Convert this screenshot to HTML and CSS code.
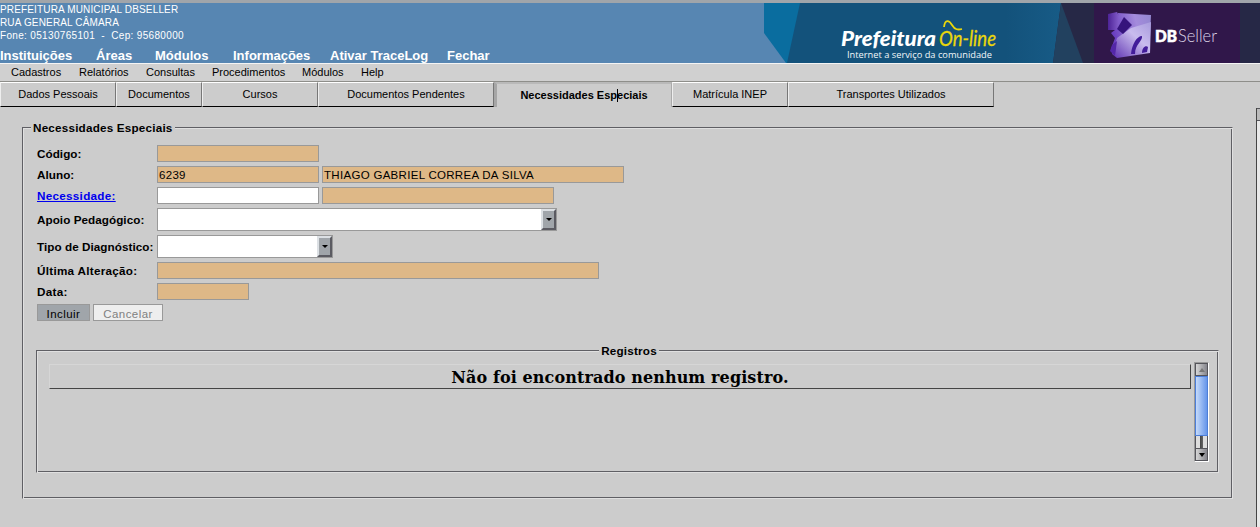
FILE: index.html
```html
<!DOCTYPE html>
<html lang="pt-BR">
<head>
<meta charset="utf-8">
<title>DBSeller - Necessidades Especiais</title>
<link rel="stylesheet" href="styles.css">
</head>
<body>
<header class="header">
  <div class="header-left">
    <div class="org"><div class="l1">PREFEITURA MUNICIPAL DBSELLER</div><div class="l2">RUA GENERAL CÂMARA</div><div class="l3">Fone: 05130765101 &nbsp;-&nbsp; Cep: 95680000</div></div>
    <nav class="main-nav"><a class="m1">Instituições</a><a class="m2">Áreas</a><a class="m3">Módulos</a><a class="m4">Informações</a><a class="m5">Ativar TraceLog</a><a class="m6">Fechar</a></nav>
  </div>
  <svg class="banner" width="496" height="60" viewBox="764 3 496 60">
    <defs>
      <linearGradient id="teal" x1="0" x2="1"><stop offset="0" stop-color="#13527b"/><stop offset=".8" stop-color="#13527b"/><stop offset="1" stop-color="#175b86"/></linearGradient>
      <linearGradient id="cube" x1="0" x2="1" y1=".3" y2="0"><stop offset="0" stop-color="#6a3fc0"/><stop offset=".6" stop-color="#a48bdc"/><stop offset="1" stop-color="#9287cf"/></linearGradient>
      <linearGradient id="cube2" x1="0" x2="1"><stop offset="0" stop-color="#4d2397"/><stop offset="1" stop-color="#8862cf"/></linearGradient>
      <linearGradient id="shine" x1="0" x2="1" y1="1" y2="0"><stop offset="0" stop-color="#5c2fb0"/><stop offset=".6" stop-color="#c9bcee"/><stop offset="1" stop-color="#a89bdd"/></linearGradient>
    </defs>
    <path fill="#262846" d="M1060 3h200v60H1050z"/>
    <path fill="url(#teal)" d="M799 3h262l-8 60H786z"/>
    <path fill="#22415f" d="M1061 3l22 60h-30z"/>
    <path fill="#0a6d9f" d="M764 3h36l-13 60h-1L764 33z"/>
    <path fill="#30174a" d="M1094 3h146v60h-146z"/>
    <path fill="url(#cube2)" d="M1108 14l9-2 3 6v12l-12 0z"/>
    <path fill="url(#cube)" d="M1118 13l33 2-1 22-36 17-3-5 4-11-4-5 8-6z"/>
    <path fill="url(#shine)" d="M1131 28l20-6-1 31-33 5-5-4 5-16z"/>
    <path fill="#35147c" d="M1124 17l8 8-9 9-6-5z"/>
    <path fill="#431d9a" d="M1131 54c1-10 6-18 11-18 1 5-7 8-7 18z"/>
    <path fill="#431d9a" d="M1142 53c0-6 4-8 6-6l-1 5z"/>
    <path fill="#5427a8" d="M1112 45l5-4-2 15-5-5z"/>
    <text x="841" y="46" class="logo-name" textLength="95" lengthAdjust="spacingAndGlyphs">Prefeitura</text>
    <text x="939" y="46" class="logo-online" textLength="57" lengthAdjust="spacingAndGlyphs">On-line</text>
    <path fill="none" stroke="#ead70b" stroke-width="1.8" d="M944 27c1-8 5-7 8-2s6 5 10 4"/>
    <text x="847" y="58" class="logo-sub" textLength="145" lengthAdjust="spacingAndGlyphs">Internet a serviço da comunidade</text>
    <text x="1155" y="42" class="logo-db" textLength="22" lengthAdjust="spacingAndGlyphs">DB</text>
    <text x="1178" y="42" class="logo-seller" textLength="39" lengthAdjust="spacingAndGlyphs">Seller</text>
  </svg>
</header>
<nav class="sub-nav"><a class="s1">Cadastros</a><a class="s2">Relatórios</a><a class="s3">Consultas</a><a class="s4">Procedimentos</a><a class="s5">Módulos</a><a class="s6">Help</a></nav>
<div class="tabs">
  <div class="tab t1">Dados Pessoais</div><div class="tab t2">Documentos</div><div class="tab t3">Cursos</div><div class="tab t4">Documentos Pendentes</div><div class="tab active">Necessidades Esp<span class="caret"></span>eciais</div><div class="tab t6">Matrícula INEP</div><div class="tab t7">Transportes Utilizados</div>
</div>
<main class="page">
  <section class="group">
    <h2 class="legend">Necessidades Especiais</h2>
    <div class="form">
      <label>Código:</label><div class="fields"><span class="input ro w162"></span></div>
      <label>Aluno:</label><div class="fields"><span class="input ro w162">6239</span><span class="input ro w302">THIAGO GABRIEL CORREA DA SILVA</span></div>
      <label class="wide"><a class="link">Necessidade:</a></label><div class="fields"><span class="input w162"></span><span class="input ro w232"></span></div>
      <label>Apoio Pedagógico:</label><div class="fields"><span class="select w400"><span class="arrow"></span></span></div>
      <label>Tipo de Diagnóstico:</label><div class="fields"><span class="select w176"><span class="arrow"></span></span></div>
      <label class="wide">Última Alteração:</label><div class="fields"><span class="input ro w442"></span></div>
      <label class="wide">Data:</label><div class="fields"><span class="input ro w92"></span></div>
    </div>
    <div class="buttons"><span class="btn incluir">Incluir</span><span class="btn disabled">Cancelar</span></div>
    <section class="group records">
      <h2 class="legend center">Registros</h2>
      <div class="records-body">
        <div class="empty"><span>Não foi encontrado nenhum registro.</span></div>
        <div class="scroll"><span class="sb up"></span><span class="thumb"></span><span class="track"></span><span class="sb down"></span></div>
      </div>
    </section>
  </section>
  <div class="page-scroll"><span></span></div>
</main>
</body>
</html>
```
FILE: styles.css
```css
* { box-sizing: border-box; }
body { margin: 0; width: 1260px; height: 527px; overflow: hidden; background: #ccc; color: #000; font-family: "Liberation Sans", Arial, sans-serif; }
.header { display: flex; height: 63px; border-top: 3px solid #a0a5aa; background: #5786b2; color: #fff; }
.header-left { width: 764px; }
.org { font-size: 10px; line-height: 13px; height: 43px; letter-spacing: 0.15px; white-space: nowrap; }
.l3 { letter-spacing: 0.33px; }
.main-nav { display: flex; font-size: 13px; font-weight: bold; line-height: 19px; white-space: nowrap; }
.m1 { width: 96px; } .m2 { width: 59px; } .m3 { width: 78px; } .m4 { width: 97px; } .m5 { width: 117px; }
.banner { display: block; }
.logo-name { font: italic 900 21px Lato, sans-serif; fill: #fff; }
.logo-online { font: italic 22px Lato, sans-serif; fill: #ead70b; stroke: #ead70b; stroke-width: .3px; }
.logo-sub { font: 9.5px "Open Sans", sans-serif; fill: #f2f7fa; }
.logo-db { font: 900 17px Lato, sans-serif; fill: #fff; stroke: #fff; stroke-width: .6px; }
.logo-seller { font: 300 18px Lato, sans-serif; fill: #ddd5e8; }
.sub-nav { display: flex; height: 19px; padding-left: 11px; border-top: 1px solid #f4f4f4; border-bottom: 1px solid #8e8e8a; background: #d0d0d0; font-size: 11px; line-height: 17px; }
.s1 { width: 68px; } .s2 { width: 67px; } .s3 { width: 66px; } .s4 { width: 90px; } .s5 { width: 59px; }
.tabs { display: flex; height: 26px; font-size: 11px; line-height: 23px; text-align: center; white-space: nowrap; }
.tab { height: 25px; border: 1px solid; border-color: #fff #777 #000 #eee; }
.t1 { width: 116px; } .t2 { width: 86px; } .t3 { width: 116px; } .t4 { width: 176px; } .t6 { width: 116px; } .t7 { width: 206px; }
.active { width: 178px; border-width: 2px 1px 0 3px; border-color: #b9b9b9 #aaa #ccc #a6a6a6; font-weight: bold; }
.caret { display: inline-block; width: 1px; height: 13px; margin-right: -1px; background: #000; vertical-align: -3px; }
.page { display: flex; justify-content: space-between; height: 419px; padding-left: 22px; }
.group { width: 1211px; height: 372px; margin-top: 19px; padding: 0 14px; border: 1px solid; border-color: #5f5f64 #e0e0e0 #e0e0e0 #5f5f64; box-shadow: inset 1px 1px #e0e0e0, inset -1px -1px #5f5f64; }
.legend { width: max-content; margin: -8px 0 0 -6px; padding: 0 2px; background: #ccc; font-size: 11.7px; line-height: 16px; letter-spacing: .2px; }
.form { display: grid; grid-template-columns: 120px 1fr; row-gap: 4px; margin-top: 9px; font-size: 11.7px; }
.form label { display: flex; align-items: center; font-weight: bold; letter-spacing: .05px; white-space: nowrap; }
.form .wide { letter-spacing: .28px; }
.link { color: #0000ee; text-decoration: underline; }
.fields { display: flex; gap: 3px; }
.input { height: 17px; padding-left: 1px; border: 1px solid #999; background: #fff; font-size: 11.5px; letter-spacing: .3px; line-height: 17px; white-space: nowrap; }
.ro { background: #deb887; }
.w92 { width: 92px; } .w162 { width: 162px; } .w176 { width: 176px; } .w232 { width: 232px; } .w302 { width: 302px; } .w400 { width: 400px; } .w442 { width: 442px; }
.select { display: flex; justify-content: flex-end; height: 23px; border: 1px solid #999; background: #fff; }
.arrow { display: flex; align-items: center; justify-content: center; width: 15px; border: 2px solid; border-color: #dce0e4 #5b5b62 #5b5b62 #dce0e4; background: #a0a5aa; }
.arrow::before { content: ""; border: 3px solid transparent; border-top-color: #000; border-bottom: 0; }
.buttons { display: flex; gap: 3px; margin-top: 4px; }
.btn { height: 17px; border: 1px solid #999; font-size: 11.5px; line-height: 18px; text-align: center; letter-spacing: .45px; }
.incluir { width: 53px; background: #a0a5aa; }
.disabled { width: 70px; background: #eee; color: #808080; }
.records { width: 1183px; height: 123px; margin: 29px 0 0 -1px; padding: 0 9px 0 12px; }
.center { margin-left: auto; margin-right: auto; }
.records-body { display: flex; justify-content: space-between; margin-top: 3px; }
.empty { width: 1142px; height: 25px; margin-top: 2px; border: 1px solid; border-color: #d6d6d6 #444 #444 #d6d6d6; font: bold 16px/25px "DejaVu Serif", serif; letter-spacing: .1px; text-align: center; }
.scroll { display: flex; flex-direction: column; width: 15px; height: 100px; border: 1px solid; border-color: #999 #fff #fff #999; }
.sb { display: flex; align-items: center; justify-content: center; height: 13px; border: 1px solid #55555b; background: linear-gradient(90deg, #d6d6d6, #85858c); }
.sb::before { content: ""; border: 3px solid transparent; }
.up::before { border-bottom: 4px solid #777; border-top: 0; }
.down::before { border-top: 4px solid #000; border-bottom: 0; }
.thumb { height: 60px; border: 1px solid #4c7ed8; background: linear-gradient(90deg, #c5dafa, #6595ea); }
.track { height: 12px; border: solid #55555b; border-width: 0 1px; background: linear-gradient(90deg, #ddd 4px, #444 4px, #666 7px, #ddd 7px); }
.page-scroll { width: 4px; border-left: 1px solid #444; background: #e9e9e9; }
.page-scroll span { display: block; height: 13px; border: solid #55555b; border-width: 1px 0; background: #bbb; }
```
